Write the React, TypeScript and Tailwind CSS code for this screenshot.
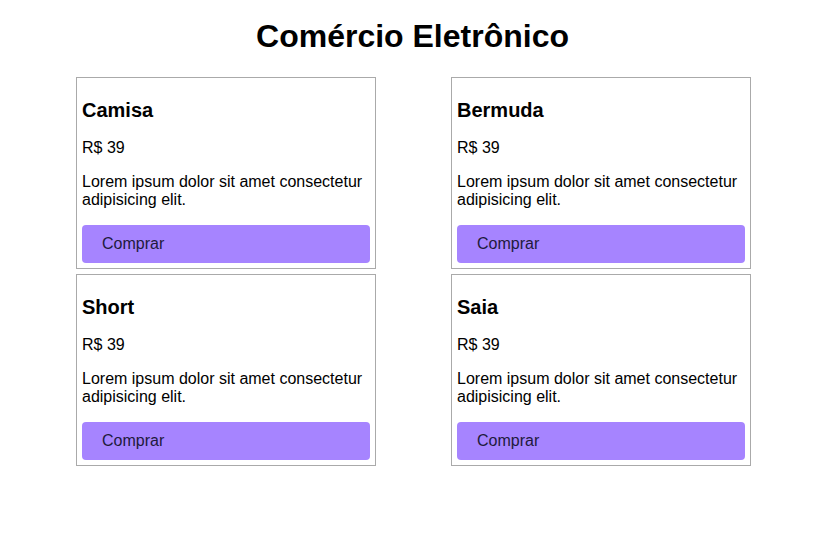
import React from "react";

const products = ["Camisa", "Bermuda", "Short", "Saia"];

function Card({ name }: { name: string }) {
  return (
    <div className="w-[300px] border border-[#aaaaaa] p-[5px] flex flex-col">
      <h3 className="mt-[15px] mb-[1px] text-[20px] font-bold leading-[24px] text-black">{name}</h3>
      <p className="mt-4 text-[16px] leading-[normal] text-black">R$ 39</p>
      <p className="mt-4 text-[16px] leading-[normal] text-black">
        Lorem ipsum dolor sit amet consectetur adipisicing elit.
      </p>
      <button className="mt-4 w-full rounded-[4px] bg-[#a684ff] px-5 py-[10px] text-left text-[16px] leading-[normal] text-[#1e1a3c]">
        Comprar
      </button>
    </div>
  );
}

export default function App() {
  return (
    <div className="min-h-[537px] w-[825px] bg-white font-['Liberation_Sans',Arial,sans-serif]">
      <h1 className="pt-[18px] text-center text-[32px] font-bold leading-[normal] text-black">
        Comércio Eletrônico
      </h1>
      <div className="mt-[22px] ml-[76px] grid grid-cols-[300px_300px] gap-x-[75px] gap-y-[5px]">
        {products.map((p) => (
          <Card key={p} name={p} />
        ))}
      </div>
    </div>
  );
}
